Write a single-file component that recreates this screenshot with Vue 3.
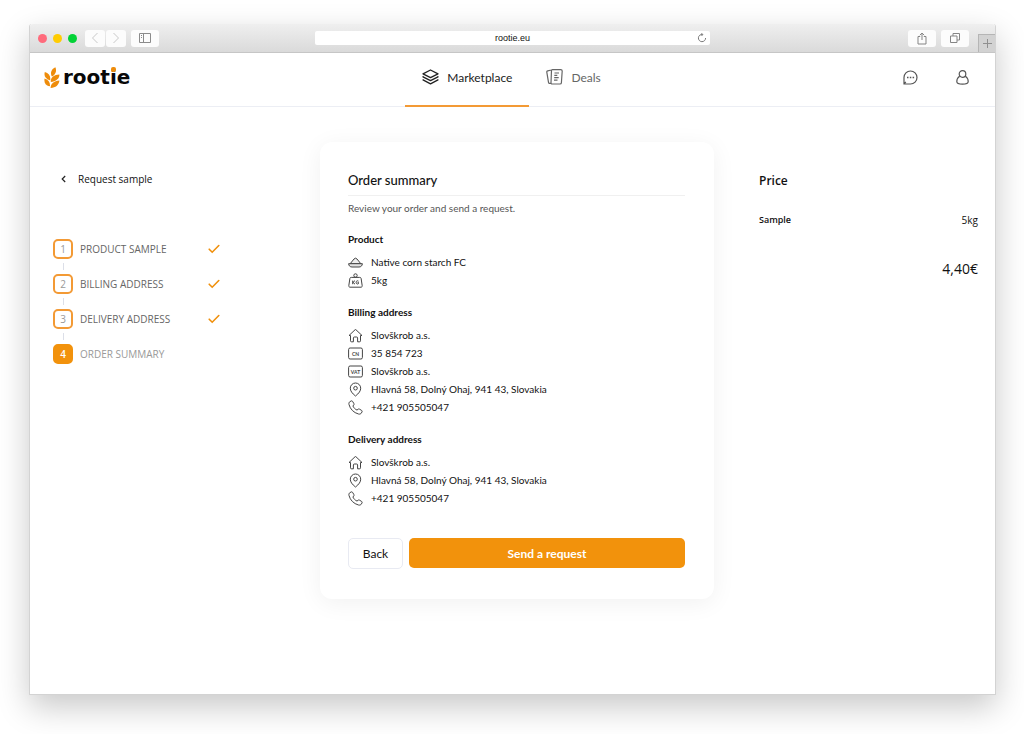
<script setup>
const steps = [
  { number: 1, label: 'PRODUCT SAMPLE', done: true },
  { number: 2, label: 'BILLING ADDRESS', done: true },
  { number: 3, label: 'DELIVERY ADDRESS', done: true },
  { number: 4, label: 'ORDER SUMMARY', done: false },
]

const sections = [
  {
    title: 'Product',
    rows: [
      { icon: 'heap', text: 'Native corn starch FC' },
      { icon: 'weight', text: '5kg' },
    ],
  },
  {
    title: 'Billing address',
    rows: [
      { icon: 'home', text: 'Slovškrob a.s.' },
      { icon: 'cn', text: '35 854 723' },
      { icon: 'vat', text: 'Slovškrob a.s.' },
      { icon: 'pin', text: 'Hlavná 58, Dolný Ohaj, 941 43, Slovakia' },
      { icon: 'phone', text: '+421 905505047' },
    ],
  },
  {
    title: 'Delivery address',
    rows: [
      { icon: 'home', text: 'Slovškrob a.s.' },
      { icon: 'pin', text: 'Hlavná 58, Dolný Ohaj, 941 43, Slovakia' },
      { icon: 'phone', text: '+421 905505047' },
    ],
  },
]
</script>

<template>
  <div class="desktop">
    <div class="window">
      <div class="toolbar">
        <div class="tools">
          <span class="light red"></span>
          <span class="light yellow"></span>
          <span class="light green"></span>
          <div class="history">
            <button class="tool" type="button" aria-label="Previous page">
              <svg width="8" height="12" viewBox="0 0 8 12"><path d="M6.5 1 1.5 6l5 5" stroke="#c9c9c9" /></svg>
            </button>
            <button class="tool" type="button" aria-label="Next page">
              <svg width="8" height="12" viewBox="0 0 8 12"><path d="m1.500 1 5 5-5 5" stroke="#c9c9c9" /></svg>
            </button>
          </div>
          <button class="tool wide" type="button" aria-label="Sidebar">
            <svg width="12" height="10" viewBox="0 0 12 10">
              <path d="M.5.500h11v9H.5zM4.500.500v9M2 2.500h1M2 4.500h1" stroke="#8b8b8b" />
            </svg>
          </button>
        </div>
        <div class="address">
          <input type="text" value="rootie.eu" aria-label="Address" />
          <button class="reload" type="button" aria-label="Reload">
            <svg width="10" height="10" viewBox="0 0 10 10">
              <path d="M8.600 5A3.600 3.600 0 1 1 5.500 1.500M4.300.200l1.600 1.300-1.400 1.500" stroke="#777" />
            </svg>
          </button>
        </div>
        <div class="tools end">
          <button class="tool wide" type="button" aria-label="Share">
            <svg width="10" height="13" viewBox="0 0 10 13">
              <path d="M3.200 4.500H1v7.500h8V4.500H6.800M5 8V1.200M2.800 3.200 5 1l2.200 2.200" stroke="#858585" />
            </svg>
          </button>
          <button class="tool wide" type="button" aria-label="Show tabs">
            <svg width="10" height="10" viewBox="0 0 10 10">
              <path d="M.5 3h6.500v6.500H.5zM3 3V.500h6.500V7H7" stroke="#858585" />
            </svg>
          </button>
          <button class="new-tab" type="button" aria-label="New tab">
            <svg width="9" height="9" viewBox="0 0 9 9"><path d="M4.500 0v9M0 4.500h9" stroke="#8f8f8f" /></svg>
          </button>
        </div>
      </div>

      <header class="header">
        <a class="logo" href="#">
          <svg width="16" height="21" viewBox="0 0 46 62">
            <g fill="#ee8c0b">
              <path d="M22 27C17 16 22 6 33 1c4 10 2 19-8 26z" />
              <path d="M16 39C4 35-2 25 2 15c11 3 17 12 16 23z" />
              <path d="M19 43c0-12 10-21 26-21 0 12-9 19-23 22z" />
              <path d="M15 57C4 54-1 46 1 34c11 3 17 12 16 22z" />
              <path d="M19 60c1-11 9-18 26-20-2 14-11 21-26 22z" />
            </g>
          </svg>
          <span class="wordmark">root<span class="dotted">i</span>e</span>
        </a>
        <nav class="nav">
          <a class="tab active" href="#">
            <svg width="17" height="16" viewBox="0 0 17 16">
              <path d="M8.500 1 1 4.800l7.500 3.800L16 4.800zM1.600 7.300 1 7.800l7.500 3.900L16 7.800l-.6-.5M1.600 10.400l-.6.500 7.500 3.900 7.500-3.900-.6-.5" stroke="#222" stroke-width="1.300" stroke-linejoin="round" />
            </svg>
            Marketplace
          </a>
          <a class="tab" href="#">
            <svg width="17" height="16" viewBox="0 0 17 16">
              <path d="M5.500 1 6.500.700h8.200c1 0 1.500.500 1.500 1.300l-.8 11.800c-.1.700-.6 1.200-1.400 1.200H6.200c-.9 0-1.300-.5-1.200-1.300zM5.500 1 1.700 1.800c-.7.200-1 .600-.9 1.300l1.700 10.300c.1.800.7 1.100 1.400 1l1.300-.2M8.500 4h4.500M8.300 6.300h3M8.200 8.700h4.500M8 11.200h3.500" stroke="#666" stroke-width="1.200" />
            </svg>
            Deals
          </a>
        </nav>
        <div class="account">
          <button class="plain" type="button" aria-label="Messages">
            <svg width="15" height="15" viewBox="0 0 15 15">
              <path d="M1 14V7.500A6.500 6.500 0 1 1 7.500 14zM1 14l1.800-2.200" stroke="#555" stroke-width="1.200" />
              <path d="M4 7.500h1.500M6.800 7.500h1.500M9.600 7.500h1.500" stroke="#555" stroke-width="1.300" />
            </svg>
          </button>
          <button class="plain" type="button" aria-label="Profile">
            <svg width="13" height="15" viewBox="0 0 13 15">
              <circle cx="6.500" cy="4" r="3.300" stroke="#555" stroke-width="1.200" />
              <path d="M3.700 6.300C1.800 7.500.8 9.300.8 11.500c0 1.800 2 2.700 5.700 2.700s5.700-.9 5.700-2.700c0-2.200-1-4-2.900-5.200" stroke="#555" stroke-width="1.200" />
            </svg>
          </button>
        </div>
      </header>

      <main class="main">
        <aside class="progress">
          <a class="back-link" href="#">
            <svg width="5" height="8" viewBox="0 0 5 8"><path d="M4.200 1 1.200 4l3 3" stroke="#222" stroke-width="1.200" /></svg>
            Request sample
          </a>
          <ol class="steps">
            <li v-for="step in steps" :key="step.number" class="step" :class="{ current: !step.done }">
              <span class="number">{{ step.number }}</span>
              <span class="label">{{ step.label }}</span>
              <svg v-if="step.done" width="12" height="10" viewBox="0 0 12 10">
                <path d="m1.200 5.200 3 3L10.800 1.500" stroke="#f0900c" stroke-width="1.600" stroke-linecap="round" />
              </svg>
            </li>
          </ol>
        </aside>

        <section class="card">
          <h1>Order summary</h1>
          <p class="intro">Review your order and send a request.</p>
          <div v-for="section in sections" :key="section.title" class="section">
            <h2>{{ section.title }}</h2>
            <ul>
              <li v-for="row in section.rows" :key="row.icon">
                <svg class="row-icon" width="15" height="15" viewBox="0 0 15 15" aria-hidden="true">
                  <template v-if="row.icon === 'heap'">
                    <path d="M2.200 8.700 6 4q1.500-1.700 3 0l3.800 4.700z" fill="#eee" />
                    <path d="M.6 8.700h13.800c-.3 2.200-1.500 3.300-3.400 3.300H4C2.100 12 .9 10.900.6 8.700z" fill="#e2e2e2" />
                  </template>
                  <template v-else-if="row.icon === 'weight'">
                    <circle cx="7.500" cy="2.500" r="1.700" />
                    <path d="M3.300 4.400h8.400c.8 0 1.200.300 1.400 1l1.100 7.300c.1.900-.4 1.500-1.200 1.500H2c-.8 0-1.300-.6-1.200-1.500l1.100-7.300c.2-.7.600-1 1.400-1z" />
                    <path d="M4.700 7.600v3.600M7 7.600 5 9.400l2 1.800M10.500 8.200c-1-.9-2.400-.3-2.400 1.200s1.400 2.100 2.400 1.200V9.500H9.600" />
                  </template>
                  <path v-else-if="row.icon === 'home'" d="M1 7.500 7 1.800q.5-.5 1 0l6 5.700H12.500v5.300q0 1-1 1H9.600V10q0-1-1-1H6.400q-1 0-1 1v3.800H3.500q-1 0-1-1V7.500z" />
                  <template v-else-if="row.icon === 'cn' || row.icon === 'vat'">
                    <rect x=".6" y="2" width="13.800" height="11" rx="1.500" />
                    <text x="7.500" y="9.500" text-anchor="middle">{{ row.icon === 'cn' ? 'CN' : 'VAT' }}</text>
                  </template>
                  <template v-else-if="row.icon === 'pin'">
                    <path d="M7.500 14C4 11.300 2.300 8.800 2.300 6.200a5.200 5.200 0 0 1 10.400 0c0 2.600-1.700 5.100-5.200 7.800z" />
                    <circle cx="7.500" cy="6.200" r="1.800" />
                  </template>
                  <path v-else d="M2 1.600 3.300.900q.8-.3 1.300.5l1.300 2.200q.4.800-.2 1.400L4.900 6c.8 1.800 2.200 3.200 4.100 4.100l1-.8q.6-.6 1.400-.2l2.200 1.300q.8.500.5 1.300l-.7 1.300c-.6 1-1.700 1.300-2.900 1C5.700 12.700 2.200 9.200 1 4.500.7 3.300 1 2.200 2 1.600z" />
                </svg>
                {{ row.text }}
              </li>
            </ul>
          </div>
          <div class="actions">
            <button class="button secondary" type="button">Back</button>
            <button class="button primary" type="button">Send a request</button>
          </div>
        </section>

        <aside class="price">
          <h2>Price</h2>
          <dl>
            <dt>Sample</dt>
            <dd>5kg</dd>
          </dl>
          <p class="total">4,40€</p>
        </aside>
      </main>
    </div>
  </div>
</template>

<style>
body {
  background: #fff;
}
</style>

<style scoped>
* {
  box-sizing: border-box;
}

h1,
h2,
p,
ul,
ol,
dl,
dd {
  margin: 0;
  padding: 0;
  list-style: none;
}

a {
  color: inherit;
  text-decoration: none;
}

button {
  border: 0;
  padding: 0;
  background: none;
  font: inherit;
  color: inherit;
  display: flex;
  align-items: center;
  justify-content: center;
}

svg {
  fill: none;
  flex: none;
  display: block;
}

.desktop {
  min-height: 100vh;
  padding: 24px 28px 39px 29px;
  display: flex;
  font-family: Lato, sans-serif;
  color: #111;
}

.window {
  flex: 1;
  display: flex;
  flex-direction: column;
  border: 1px solid #d3d3d3;
  border-top: 0;
  border-radius: 3px 3px 0 0;
  background: #fff;
  box-shadow: 0 12px 32px rgba(0, 0, 0, 0.22);
}

.toolbar {
  height: 29px;
  display: grid;
  grid-template-columns: 1fr 41% 1fr;
  align-items: center;
  background: linear-gradient(#efefef, #dadada);
  border-bottom: 1px solid #c6c6c6;
  border-radius: 3px 3px 0 0;
}

.tools {
  display: flex;
  align-items: center;
  padding-left: 8px;
  gap: 5px;
}

.tools.end {
  align-self: stretch;
  justify-content: flex-end;
  padding: 0;
}

.light {
  width: 9px;
  height: 9px;
  border-radius: 50%;
}

.light + .light {
  margin-left: 1px;
}

.red {
  background: #ff6b7c;
}

.yellow {
  background: #ffcc02;
}

.green {
  background: #02d236;
}

.history {
  display: flex;
  gap: 1px;
  margin-left: 3px;
}

.tool {
  width: 20px;
  height: 17px;
  border-radius: 3px;
  background: #fcfcfc;
}

.tool.wide {
  width: 28px;
}

.address {
  display: flex;
  position: relative;
}

.address input {
  width: 100%;
  height: 14px;
  border: 0;
  border-radius: 2px;
  padding: 0;
  background: #fff;
  text-align: center;
  font: 9px "Liberation Sans", sans-serif;
  color: #111;
}

.reload {
  position: absolute;
  right: 3px;
  top: 2px;
}

.new-tab {
  align-self: flex-end;
  width: 17px;
  height: 18px;
  margin-left: 4px;
  background: #d2d2d2;
  border-top: 1px solid #b5b5b5;
  border-left: 1px solid #b5b5b5;
}

.header {
  height: 54px;
  display: grid;
  grid-template-columns: 1fr auto 1fr;
  border-bottom: 1px solid #eceef4;
}

.logo {
  display: flex;
  align-items: center;
  gap: 3px;
  padding: 0 0 6px 14px;
}

.wordmark {
  font-family: "DejaVu Sans", sans-serif;
  font-size: 20px;
  line-height: 24px;
  font-weight: 700;
  color: #080808;
}

.dotted {
  position: relative;
}

.dotted::after {
  content: "";
  position: absolute;
  left: 1px;
  top: 2px;
  width: 5px;
  height: 5px;
  border-radius: 2px;
  background: #ee8c0b;
}

.nav {
  display: flex;
}

.tab {
  display: flex;
  align-items: center;
  gap: 8px;
  height: 54px;
  padding: 0 17px 4px;
  border-bottom: 2px solid transparent;
  font-size: 12px;
  color: #666;
}

.tab:last-child {
  padding-right: 19px;
}

.tab.active {
  color: #222;
  border-color: #f39a35;
}

.account {
  display: flex;
  align-items: center;
  justify-content: flex-end;
  gap: 38px;
  padding: 0 26px 6px 0;
}

.main {
  flex: 1;
  display: grid;
  grid-template-columns: 290fr 394fr 281fr;
  align-items: start;
  padding-top: 35px;
}

.progress {
  padding: 29px 23px 0;
  font-family: "Open Sans", sans-serif;
}

.back-link {
  display: flex;
  align-items: center;
  gap: 12px;
  padding-left: 8px;
  font-size: 10px;
  line-height: 16px;
}

.steps {
  display: grid;
  gap: 15px;
  width: 167px;
  margin-top: 52px;
}

.step {
  position: relative;
  display: flex;
  align-items: center;
  gap: 7px;
  font-size: 10px;
  line-height: 20px;
  color: #666;
}

.step + .step::before {
  content: "";
  position: absolute;
  left: 10px;
  top: -11px;
  width: 1px;
  height: 7px;
  background: #dcdfe8;
}

.number {
  width: 20px;
  height: 20px;
  border: 2px solid #f39a35;
  border-radius: 5px;
  line-height: 16px;
  text-align: center;
  color: #999;
}

.label {
  flex: 1;
}

.step.current {
  color: #999;
}

.current .number {
  background: #f2920c;
  border-color: #f2920c;
  color: #fff;
  font-weight: 600;
}

.card {
  padding: 28px 29px 30px 28px;
  border-radius: 12px;
  background: #fff;
  box-shadow: 0 4px 24px rgba(0, 0, 0, 0.06);
}

.card h1 {
  padding-bottom: 5px;
  border-bottom: 1px solid #f0f0f0;
  font-size: 13px;
  line-height: 20px;
  font-weight: 500;
}

.intro {
  margin: 4px 0 14px;
  font-size: 10px;
  line-height: 16px;
  color: #555;
}

.section + .section {
  margin-top: 14px;
}

.section h2 {
  margin-bottom: 5px;
  font-size: 10px;
  line-height: 18px;
  font-weight: 700;
}

.section li {
  display: flex;
  align-items: center;
  gap: 8px;
  font-size: 10px;
  line-height: 18px;
}

.row-icon {
  stroke: #444;
}

.row-icon text {
  font: 700 5px Lato, sans-serif;
  fill: #444;
  stroke: none;
}

.actions {
  display: flex;
  gap: 6px;
  margin-top: 31px;
}

.button {
  height: 30px;
  border-radius: 5px;
  font-size: 12px;
}

.secondary {
  width: 55px;
  height: 31px;
  border: 1px solid #e8eaf2;
}

.primary {
  flex: 1;
  background: #f2920c;
  color: #fff;
  font-weight: 700;
}

.price {
  padding: 29px 17px 0 45px;
  font-family: "Open Sans", sans-serif;
}

.price h2 {
  font-size: 12px;
  line-height: 20px;
  font-weight: 600;
}

.price dl {
  display: flex;
  justify-content: space-between;
  margin-top: 20px;
  font-size: 10px;
  line-height: 18px;
}

.price dt {
  font-size: 9px;
  font-weight: 600;
}

.total {
  margin-top: 30px;
  font-size: 14px;
  line-height: 20px;
  text-align: right;
}
</style>
